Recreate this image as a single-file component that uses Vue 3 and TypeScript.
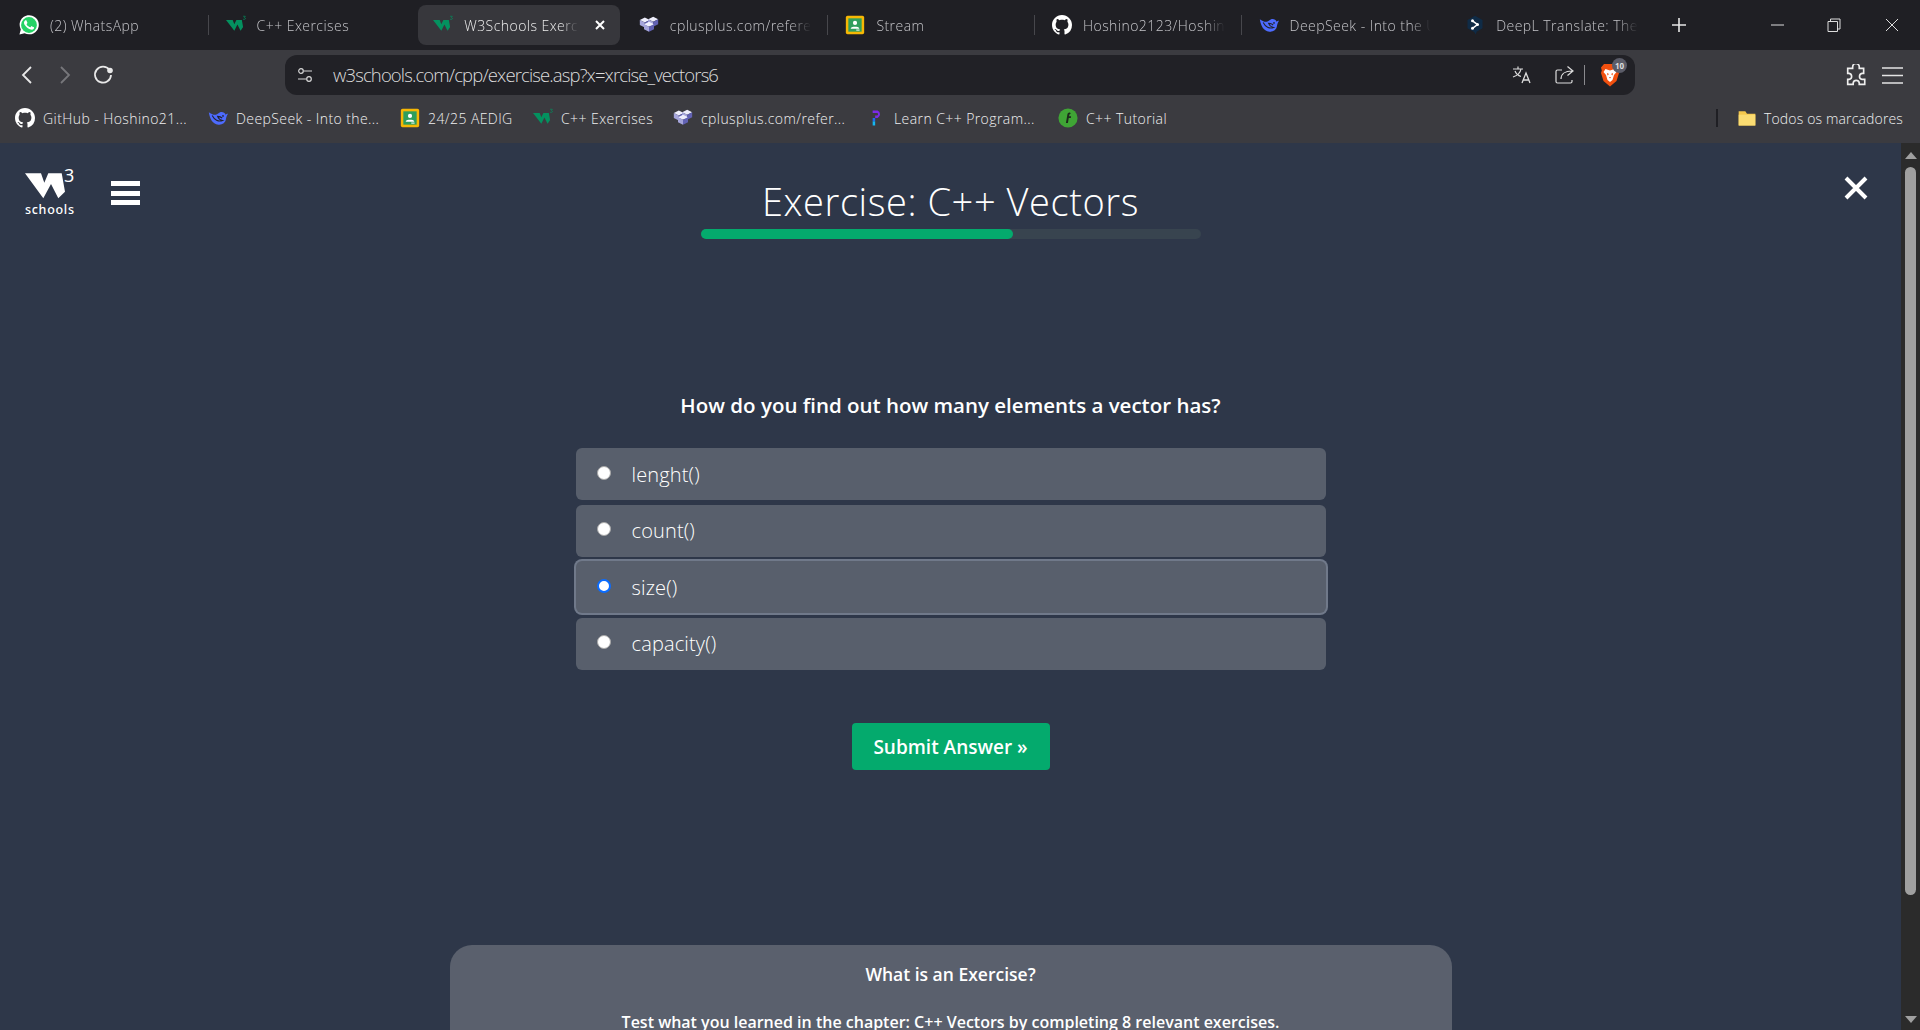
<script setup lang="ts">
type Fav = 'wa' | 'w3' | 'cpp' | 'room' | 'gh' | 'ds' | 'dl' | 'learn' | 'tut' | 'folder'

const tabs: { icon: Fav; title: string; active?: boolean; noDivider?: boolean }[] = [
  { icon: 'wa', title: '(2) WhatsApp' },
  { icon: 'w3', title: 'C++ Exercises', noDivider: true },
  { icon: 'w3', title: 'W3Schools Exercises', active: true, noDivider: true },
  { icon: 'cpp', title: 'cplusplus.com/reference/vector' },
  { icon: 'room', title: 'Stream' },
  { icon: 'gh', title: 'Hoshino2123/Hoshino2123' },
  { icon: 'ds', title: 'DeepSeek - Into the Unknown', noDivider: true },
  { icon: 'dl', title: 'DeepL Translate: The world', noDivider: true },
]

const bookmarks: { icon: Fav; title: string; width: number }[] = [
  { icon: 'gh', title: 'GitHub - Hoshino21...', width: 193 },
  { icon: 'ds', title: 'DeepSeek - Into the...', width: 192 },
  { icon: 'room', title: '24/25 AEDIG', width: 133 },
  { icon: 'w3', title: 'C++ Exercises', width: 140 },
  { icon: 'cpp', title: 'cplusplus.com/refer...', width: 193 },
  { icon: 'learn', title: 'Learn C++ Program...', width: 192 },
  { icon: 'tut', title: 'C++ Tutorial', width: 130 },
]

const options = ['lenght()', 'count()', 'size()', 'capacity()']
const selected = 2
const progress = 62.4
</script>

<template>
  <div class="browser">
    <header class="tabstrip">
      <div class="tabs">
        <div
          v-for="tab in tabs"
          :key="tab.title"
          class="tab"
          :class="{ active: tab.active, divided: !tab.noDivider }">
          <span class="tab-inner">
            <svg class="fav" viewBox="0 0 24 24">
              <use :href="'#fav-' + tab.icon" />
            </svg>
            <span class="tab-title">{{ tab.title }}</span>
            <svg v-if="tab.active" class="tab-close" viewBox="0 0 12 12">
              <path d="M2 2l8 8M10 2l-8 8" stroke="#fff" stroke-width="2" fill="none" />
            </svg>
          </span>
        </div>
      </div>
      <svg class="newtab" viewBox="0 0 14 14">
        <path d="M7 0v14M0 7h14" stroke="#e6e6e6" stroke-width="1.6" fill="none" />
      </svg>
      <div class="winctl">
        <svg viewBox="0 0 14 14"><path d="M0 7h13" stroke="#ddd" stroke-width="1" fill="none" /></svg>
        <svg viewBox="0 0 14 14">
          <path d="M1 3.500h9.500v10H1zM3.500 3V1h9.500v10h-2.500" stroke="#ddd" stroke-width="1" fill="none" />
        </svg>
        <svg viewBox="0 0 14 14"><path d="M1 1l12 12M13 1L1 13" stroke="#ddd" stroke-width="1" fill="none" /></svg>
      </div>
    </header>

    <div class="toolbar">
      <div class="nav">
        <svg viewBox="0 0 14 20"><path d="M11 2L3 10l8 8" stroke="#e8e8e8" stroke-width="1.800" fill="none" /></svg>
        <svg viewBox="0 0 14 20"><path d="M3 2l8 8-8 8" stroke="#77777b" stroke-width="1.800" fill="none" /></svg>
        <svg viewBox="0 0 22 22">
          <path d="M17.500 6A8 8 0 1 0 19 11" stroke="#e8e8e8" stroke-width="1.800" fill="none" />
          <circle cx="18" cy="6.500" r="2.800" fill="#e8e8e8" />
        </svg>
      </div>
      <div class="omnibox">
        <svg class="tune" viewBox="0 0 16 16">
          <circle cx="4" cy="4" r="2.300" stroke="#d8d8d8" stroke-width="1.200" fill="none" />
          <path d="M7 4h8M1 12h8" stroke="#d8d8d8" stroke-width="1.200" />
          <circle cx="12" cy="12" r="2.300" stroke="#d8d8d8" stroke-width="1.200" fill="none" />
        </svg>
        <span class="url">w3schools.com/cpp/exercise.asp?x=xrcise_vectors6</span>
        <svg class="omni-ico" viewBox="0 0 20 20">
          <path d="M1 4h10M6 1.500V4M9 4c-.6 3.500-3.500 6.500-8 8M3 6c1 2.500 3 4.500 6 5.500" stroke="#ddd" stroke-width="1.200" fill="none" />
          <path d="M10 18l4-10 4 10M11.500 15h5" stroke="#ddd" stroke-width="1.300" fill="none" />
        </svg>
        <svg class="omni-ico share" viewBox="0 0 20 20">
          <path d="M7 5H2.500A1.500 1.500 0 0 0 1 6.500v10A1.500 1.500 0 0 0 2.500 18h13a1.500 1.500 0 0 0 1.500-1.500V15" stroke="#ddd" stroke-width="1.200" fill="none" />
          <path d="M6 14c0-5 4-8 11-8M12.500 1.500L18 6l-5.500 4.500" stroke="#ddd" stroke-width="1.200" fill="none" />
        </svg>
        <span class="omni-sep"></span>
        <span class="brave">
          <svg viewBox="0 0 20 24">
            <path d="M4 1h12l3 3.500-.8 3L19 10l-2.500 8L10 23.500 3.500 18 1 10l.8-2.500L1 4.500z" fill="#f1500f" />
            <path d="M5.500 6L10 7.500 14.500 6l2 3-2.500 3-1.500 5L10 19l-2.500-2-1.500-5-2.500-3z" fill="#fff" />
            <path d="M7 10l2 1-1.500 1.500zM13 10l-2 1 1.500 1.500zM9 14h2l-1 1.500z" fill="#f1500f" />
          </svg>
          <b>10</b>
        </span>
      </div>
      <div class="tools">
        <svg class="puzzle" viewBox="2 1 19 20">
          <path d="M8 3.500a3 3 0 0 1 6 0V5h4v4.500h-1.500a2.800 2.800 0 0 0 0 5.500H19v4.500h-5v-1.300a2.800 2.800 0 0 0-5.500 0v1.300H3.500V15h1.300a2.800 2.800 0 0 0 0-5.500H3.500V5H8z" stroke="#eee" stroke-width="1.500" fill="none" />
        </svg>
        <svg class="menu" viewBox="0 0 21 17"><path d="M0 1h21M0 8.500h21M0 16h21" stroke="#e4e4e4" stroke-width="1.500" fill="none" /></svg>
      </div>
    </div>

    <nav class="bookmarks">
      <div
        v-for="b in bookmarks"
        :key="b.title"
        class="bookmark"
        :style="{ width: b.width + 'px' }">
        <svg class="fav" viewBox="0 0 24 24">
          <use :href="'#fav-' + b.icon" />
        </svg>
        <span>{{ b.title }}</span>
      </div>
      <div class="all-bookmarks">
        <i></i>
        <svg class="fav" viewBox="0 0 24 24">
          <use href="#fav-folder" />
        </svg>
        <span>Todos os marcadores</span>
      </div>
    </nav>

    <div class="viewport">
      <main class="page">
        <div class="head">
          <div class="brand">
            <div class="logo">
              <svg viewBox="0 0 48 32" class="logo-mark">
                <path d="M0 5.300h16l3.300 9.400 4-9.400h13.400L40 23.700l-6.700 6.600L26 16l-7.700 14.300z" fill="#fff" />
                <text x="39" y="14" class="logo-three">3</text>
              </svg>
              <span class="logo-word">schools</span>
            </div>
            <div class="burger"><i></i><i></i><i></i></div>
          </div>
          <div class="title-wrap">
            <h1>Exercise: C++ Vectors</h1>
            <div class="progress">
              <div class="progress-fill" :style="{ width: progress + '%' }"></div>
            </div>
          </div>
          <div class="close-wrap">
            <svg class="page-close" viewBox="0 0 24 24">
              <path d="M2 2l20 20M22 2L2 22" stroke="#fff" stroke-width="4" fill="none" />
            </svg>
          </div>
        </div>

        <h2 class="question">How do you find out how many elements a vector has?</h2>

        <div class="answers">
          <label
            v-for="(opt, i) in options"
            :key="opt"
            class="answer"
            :class="{ selected: i === selected }">
            <span class="radio"></span>
            <span class="answer-text">{{ opt }}</span>
          </label>
        </div>

        <button class="submit">Submit Answer »</button>

        <section class="info">
          <h3>What is an Exercise?</h3>
          <p>Test what you learned in the chapter: C++ Vectors by completing 8 relevant exercises.</p>
        </section>
      </main>

      <aside class="scrollbar">
        <span class="arrow up"></span>
        <span class="thumb"></span>
        <span class="arrow down"></span>
      </aside>
    </div>

    <svg width="0" height="0" class="defs">
      <defs>
        <g id="fav-wa">
          <path d="M.5 23.500l1.700-6.200A11.500 11.500 0 1 1 6.700 21.800z" fill="#fff" />
          <circle cx="12" cy="12" r="9.500" fill="#25d366" />
          <path d="M17.472 14.382c-.297-.149-1.758-.867-2.030-.967-.273-.099-.471-.148-.67.150-.197.297-.767.966-.94 1.164-.173.199-.347.223-.644.075-.297-.150-1.255-.463-2.390-1.475-.883-.788-1.480-1.761-1.653-2.059-.173-.297-.018-.458.130-.606.134-.133.298-.347.446-.520.149-.174.198-.298.298-.497.099-.198.050-.371-.025-.520-.075-.149-.669-1.612-.916-2.207-.242-.579-.487-.500-.669-.510-.173-.008-.371-.010-.570-.010-.198 0-.520.074-.792.372-.272.297-1.040 1.016-1.040 2.479 0 1.462 1.065 2.875 1.213 3.074.149.198 2.096 3.200 5.077 4.487.709.306 1.262.489 1.694.625.712.227 1.360.195 1.871.118.571-.085 1.758-.719 2.006-1.413.248-.694.248-1.289.173-1.413-.074-.124-.272-.198-.570-.347z" fill="#fff" />
        </g>
        <g id="fav-w3">
          <path d="M0 6h8l2 5 2.500-5H19l1.500 8.500-3 4.500-3.800-7.500L10 19z" fill="#04915f" />
          <path d="M20.500 1.500h2.700l-1.300 1.700c1 0 1.500.5 1.500 1.100 0 .9-1.600 1.300-2.900.7" stroke="#04915f" stroke-width=".8" fill="none" />
        </g>
        <g id="fav-cube">
          <path d="M0-6l6 3-6 3-6-3z" fill="#eeeefc" />
          <path d="M-6-3L0 0v6l-6-3z" fill="#a6a6dc" />
          <path d="M6-3L0 0v6l6-3z" fill="#6262b4" />
        </g>
        <g id="fav-cpp">
          <use href="#fav-cube" x="7" y="9" />
          <use href="#fav-cube" x="17" y="8" />
          <use href="#fav-cube" x="12" y="14" />
        </g>
        <g id="fav-room">
          <rect x="1" y="1" width="22" height="22" rx="2" fill="#f6b704" />
          <rect x="4" y="4" width="16" height="16" fill="#2f9e5c" />
          <circle cx="12" cy="9.500" r="2.500" fill="#fff" />
          <path d="M7 15.500c1-2 9-2 10 0v1H7z" fill="#fff" />
          <rect x="13.500" y="17.500" width="4" height="1.200" fill="#fff" />
        </g>
        <g id="fav-gh" transform="scale(1.500)">
          <path d="M8 0C3.580 0 0 3.580 0 8c0 3.540 2.290 6.530 5.470 7.590.400.070.550-.170.550-.380 0-.190-.010-.820-.010-1.490-2.010.370-2.530-.490-2.690-.940-.090-.230-.480-.940-.820-1.130-.280-.150-.680-.520-.010-.530.630-.010 1.080.580 1.230.820.720 1.210 1.870.870 2.330.660.070-.520.280-.870.510-1.070-1.780-.200-3.640-.890-3.640-3.950 0-.870.310-1.590.820-2.150-.080-.200-.360-1.020.080-2.120 0 0 .670-.210 2.200.820.640-.180 1.320-.270 2-.270.680 0 1.360.090 2 .270 1.530-1.040 2.200-.820 2.200-.820.440 1.100.160 1.920.080 2.120.510.560.820 1.270.820 2.150 0 3.070-1.870 3.750-3.650 3.950.290.250.540.730.540 1.480 0 1.070-.010 1.930-.010 2.200 0 .210.150.460.550.380A8.013 8.013 0 0 0 16 8c0-4.420-3.580-8-8-8z" fill="#fff" />
        </g>
        <g id="fav-ds">
          <path d="M1 5c1 7 4 14 11.500 15 4.500.5 8.500-2.500 9-6.500.3-2 .8-3.800 2.500-6.500-1.200-.3-2 .2-2.800 1-1.200-2.500-4.200-4-7.200-2.500-1.500.8-3 2-4.500 2.500C7 8.500 3.500 7 1 5z" fill="#4d6bfe" />
          <path d="M5 9c2.500 5 7.500 8 12.500 6-2.500-.5-5-2.500-6-5 2.500 0 4 .5 5.500 2" stroke="#23232a" stroke-width="1.300" fill="none" />
          <circle cx="18" cy="9.500" r="1" fill="#23232a" />
        </g>
        <g id="fav-dl">
          <path d="M12 1l9 5v10l-7 4-1 3.500-2-3-8-4.500V6z" fill="#0f2b46" />
          <path d="M9 7l6 4.500L9 16" stroke="#fff" stroke-width="1.800" fill="none" />
          <circle cx="9" cy="7" r="1.800" fill="#fff" />
          <circle cx="9" cy="16" r="1.800" fill="#fff" />
          <circle cx="15" cy="11.500" r="1.800" fill="#fff" />
        </g>
        <g id="fav-learn">
          <path d="M8 3h6a5 5 0 0 1 0 9h-3v-3h2a1.500 1.500 0 0 0 0-3H8z" fill="#7c2be8" />
          <path d="M8 12h3v4H8z" fill="#1f6cf0" />
          <path d="M8 16h3v5H8z" fill="#16b6f0" />
        </g>
        <g id="fav-tut">
          <circle cx="12" cy="12" r="11.500" fill="#3fa535" />
          <path d="M14.500 5.500c-2-.3-3 .8-3.300 2.500l-1.700 10h2.400l1-6h2.500l.3-2h-2.400l.4-2.200c.1-.6.500-.8 1.500-.6z" fill="#1d2a1b" />
        </g>
        <g id="fav-folder">
          <path d="M2 4h8l2 3h10v14H2z" fill="#f5c84c" />
          <path d="M2 8h20v13H2z" fill="#fbdc72" />
        </g>
      </defs>
    </svg>
  </div>
</template>

<style>
html, body {
  margin: 0;
  overflow: hidden;
}
</style>

<style scoped>
.browser {
  width: 1920px;
  height: 1030px;
  display: flex;
  flex-direction: column;
  overflow: hidden;
  font-family: "Open Sans", "Noto Sans", sans-serif;
  background: #2e3749;
}
.defs {
  position: absolute;
}

/* tabs */
.tabstrip {
  height: 50px;
  flex: none;
  display: flex;
  align-items: center;
  background: #1f1f24;
  padding-left: 2px;
}
.tabs {
  display: flex;
  height: 40px;
}
.tab {
  width: 206.600px;
  box-sizing: border-box;
  position: relative;
  display: flex;
  align-items: center;
  padding-left: 17px;
  padding-right: 17px;
  color: #c4c4c8;
  font-size: 14px;
  font-weight: 300;
  letter-spacing: 0.45px;
}
.tab.divided::after {
  content: "";
  position: absolute;
  right: 0;
  top: 10px;
  height: 20px;
  width: 1px;
  background: #47474c;
}
.tab-inner {
  display: flex;
  align-items: center;
  width: 100%;
  min-width: 0;
}
.tab.active {
  width: 202px;
  margin: 0 1.600px 0 3px;
  background: #37373c;
  border-radius: 8px;
  color: #eee;
  padding-left: 15px;
  padding-right: 14px;
}
.fav {
  width: 20px;
  height: 20px;
  flex: none;
}
.tab-title {
  margin-left: 11px;
  flex: 1;
  min-width: 0;
  white-space: nowrap;
  overflow: hidden;
  -webkit-mask-image: linear-gradient(to right, #000 85%, transparent);
  mask-image: linear-gradient(to right, #000 85%, transparent);
}
.tab-close {
  width: 12px;
  height: 12px;
  flex: none;
  margin-left: 16px;
}
.newtab {
  width: 14px;
  height: 14px;
  margin-left: 17px;
  flex: none;
}
.winctl {
  margin-left: auto;
  display: flex;
  align-items: center;
  padding-right: 21px;
}
.winctl svg {
  width: 14px;
  height: 14px;
  margin-left: 44px;
}
.winctl svg:nth-child(2) {
  margin-left: 42px;
}

/* toolbar */
.toolbar {
  height: 45px;
  flex: none;
  display: flex;
  align-items: center;
  background: #3b3b40;
  padding-top: 5px;
  box-sizing: border-box;
}
.nav {
  width: 285px;
  flex: none;
  display: flex;
  align-items: center;
  padding-left: 20px;
  box-sizing: border-box;
}
.nav svg {
  width: 14px;
  height: 20px;
}
.nav svg:nth-child(2) {
  margin-left: 24px;
}
.nav svg:last-child {
  width: 22px;
  height: 22px;
  margin-left: 20px;
}
.omnibox {
  width: 1350px;
  height: 40px;
  flex: none;
  box-sizing: border-box;
  background: #212126;
  border-radius: 12px;
  display: flex;
  align-items: center;
  padding-left: 12px;
  color: #dcdcdc;
}
.tune {
  width: 16px;
  height: 16px;
  flex: none;
}
.url {
  margin-left: 20px;
  margin-bottom: 2px;
  flex: 1;
  font-size: 18.5px;
  font-weight: 300;
  letter-spacing: -0.875px;
  white-space: nowrap;
}
.omni-ico {
  width: 20px;
  height: 20px;
  flex: none;
}
.share {
  margin-left: 23px;
}
.omni-sep {
  width: 1px;
  height: 20px;
  background: #8a8a8e;
  margin-left: 9px;
}
.brave {
  position: relative;
  width: 20px;
  height: 24px;
  margin-left: 15px;
  margin-right: 15px;
  flex: none;
}
.brave svg {
  width: 20px;
  height: 24px;
}
.brave b {
  position: absolute;
  left: 12px;
  top: -5px;
  width: 15px;
  height: 15px;
  border-radius: 50%;
  background: #5b5c68;
  color: #ddd;
  font-size: 8px;
  line-height: 15px;
  text-align: center;
}
.tools {
  display: flex;
  align-items: center;
  gap: 15px;
  padding-left: 211px;
}
.puzzle {
  width: 21px;
  height: 22px;
  flex: none;
}
.menu {
  width: 21px;
  height: 17px;
  flex: none;
}

/* bookmarks */
.bookmarks {
  height: 48px;
  flex: none;
  display: flex;
  align-items: center;
  background: #3b3b40;
  box-sizing: border-box;
  padding: 0 17px 2px 15px;
  color: #f0f0f0;
  font-size: 14px;
  font-weight: 300;
  letter-spacing: 0.42px;
}
.bookmark {
  display: flex;
  align-items: center;
  gap: 8px;
  flex: none;
  white-space: nowrap;
}
.all-bookmarks {
  margin-left: auto;
  display: flex;
  align-items: center;
  gap: 7px;
  white-space: nowrap;
  letter-spacing: 0.15px;
}
.all-bookmarks i {
  width: 2px;
  height: 18px;
  background: #1f1f24;
  margin-right: 12px;
}

/* page */
.viewport {
  flex: 1;
  min-height: 0;
  display: flex;
}
.page {
  flex: 1;
  min-width: 0;
  display: flex;
  flex-direction: column;
  align-items: center;
  background: #2e3749;
  color: #fff;
  overflow: hidden;
  padding-top: 33px;
  box-sizing: border-box;
}
.head {
  width: 100%;
  display: grid;
  grid-template-columns: 1fr auto 1fr;
}
.brand {
  display: flex;
  align-items: flex-start;
  padding-left: 25px;
}
.logo {
  width: 48px;
  display: flex;
  flex-direction: column;
  margin-top: -8px;
}
.logo-mark {
  width: 48px;
  height: 32px;
  overflow: visible;
}
.logo-three {
  font-size: 18px;
  font-weight: 400;
  fill: #fff;
  font-family: "Noto Sans", sans-serif;
}
.logo-word {
  font-family: "Noto Sans", sans-serif;
  font-size: 12.5px;
  font-weight: 500;
  line-height: 16px;
  letter-spacing: 0.7px;
  margin-top: 2px;
}
.burger {
  width: 29px;
  margin-left: 38px;
  margin-top: 5px;
  display: flex;
  flex-direction: column;
  gap: 4.500px;
}
.burger i {
  height: 5px;
  background: #fff;
}
.title-wrap {
  width: 500px;
  display: flex;
  flex-direction: column;
  align-items: center;
}
h1 {
  margin: 0;
  font-size: 38px;
  line-height: 50px;
  font-weight: 300;
  letter-spacing: 0.57px;
  white-space: nowrap;
}
.progress {
  width: 100%;
  height: 10px;
  margin-top: 3px;
  border-radius: 5px;
  background: #38444f;
}
.progress-fill {
  height: 100%;
  border-radius: 5px;
  background: #04aa6d;
}
.close-wrap {
  display: flex;
  justify-content: flex-end;
  padding-right: 33px;
}
.page-close {
  width: 24px;
  height: 24px;
}
.question {
  margin: 151px 0 28px;
  font-size: 20.5px;
  line-height: 30px;
  font-weight: 600;
}
.answers {
  width: 750px;
  display: flex;
  flex-direction: column;
  gap: 4.670px;
}
.answer {
  height: 52px;
  border-radius: 6px;
  background: #585f6c;
  display: flex;
  align-items: center;
  box-sizing: border-box;
  padding-left: 20px;
}
.answer.selected {
  box-shadow: 0 0 0 2px #70798a;
}
.radio {
  width: 14px;
  height: 14px;
  margin-left: 1px;
  border-radius: 50%;
  background: #fff;
  border: 1px solid #a8a8a8;
  box-sizing: border-box;
  margin-top: -3px;
  flex: none;
}
.selected .radio {
  border: 2.700px solid #0a6cff;
}
.answer-text {
  margin-left: 21px;
  font-size: 20px;
  font-weight: 300;
  letter-spacing: 0.15px;
}
.submit {
  margin-top: 53px;
  width: 198px;
  height: 47px;
  flex: none;
  border: 0;
  border-radius: 4px;
  background: #04aa6d;
  color: #fff;
  font-family: inherit;
  font-size: 19px;
  font-weight: 600;
  padding-top: 2px;
}
.info {
  margin-top: 175px;
  width: 1002px;
  flex: none;
  border-radius: 22px 22px 0 0;
  background: #5a606d;
  text-align: center;
  padding-top: 15px;
  box-sizing: border-box;
}
.info h3 {
  margin: 0;
  font-size: 17.5px;
  line-height: 28px;
  font-weight: 600;
}
.info p {
  margin: 20px 0 0;
  font-size: 16px;
  line-height: 28px;
  font-weight: 600;
}

/* scrollbar */
.scrollbar {
  width: 19px;
  flex: none;
  background: #2b2b2b;
  display: flex;
  flex-direction: column;
  align-items: center;
  padding: 9px 0 7px;
  box-sizing: border-box;
}
.arrow {
  width: 0;
  height: 0;
  border-left: 6.500px solid transparent;
  border-right: 6.500px solid transparent;
}
.arrow.up {
  border-bottom: 7px solid #a0a0a0;
}
.arrow.down {
  border-top: 7px solid #a0a0a0;
  margin-top: auto;
}
.thumb {
  width: 11px;
  height: 728px;
  margin-top: 8px;
  border-radius: 6px;
  background: #a0a0a0;
}
</style>
